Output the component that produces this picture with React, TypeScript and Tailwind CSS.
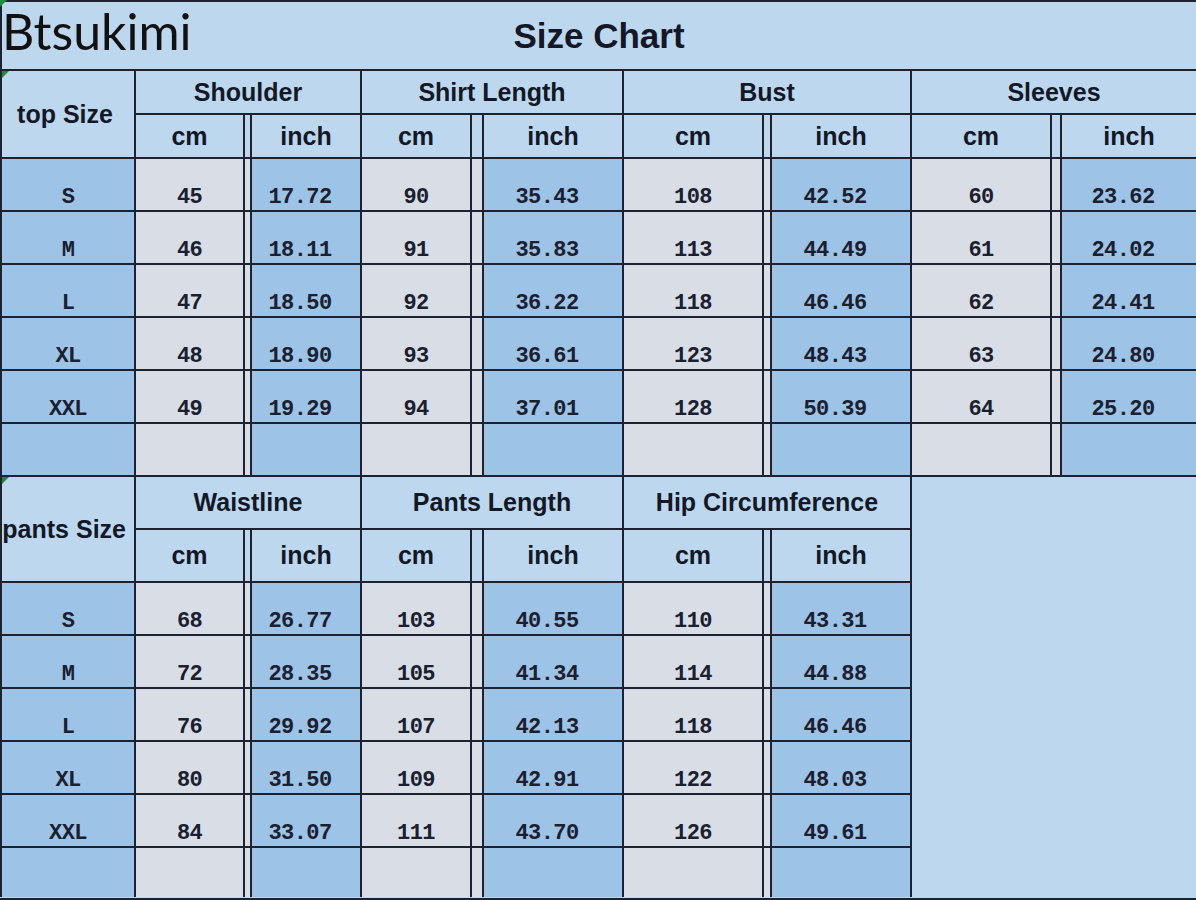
import React from "react"

const sizes = ["S", "M", "L", "XL", "XXL", ""]

type Group = { title: string; cm: string[]; inch: string[] }

const topGroups: Group[] = [
  { title: "Shoulder", cm: ["45", "46", "47", "48", "49", ""], inch: ["17.72", "18.11", "18.50", "18.90", "19.29", ""] },
  { title: "Shirt Length", cm: ["90", "91", "92", "93", "94", ""], inch: ["35.43", "35.83", "36.22", "36.61", "37.01", ""] },
  { title: "Bust", cm: ["108", "113", "118", "123", "128", ""], inch: ["42.52", "44.49", "46.46", "48.43", "50.39", ""] },
  { title: "Sleeves", cm: ["60", "61", "62", "63", "64", ""], inch: ["23.62", "24.02", "24.41", "24.80", "25.20", ""] },
]

const pantsGroups: Group[] = [
  { title: "Waistline", cm: ["68", "72", "76", "80", "84", ""], inch: ["26.77", "28.35", "29.92", "31.50", "33.07", ""] },
  { title: "Pants Length", cm: ["103", "105", "107", "109", "111", ""], inch: ["40.55", "41.34", "42.13", "42.91", "43.70", ""] },
  { title: "Hip Circumference", cm: ["110", "114", "118", "122", "126", ""], inch: ["43.31", "44.88", "46.46", "48.03", "49.61", ""] },
]

const line = "border-l-2 border-t-2 border-[#1c2230]"
const head = `${line} bg-[#bdd7ee] flex items-center justify-center font-['Liberation_Sans',Arial,sans-serif] font-bold text-[25px] leading-none text-[#121826] whitespace-nowrap`
const data = `${line} flex items-end justify-center pb-[1px] font-['Liberation_Mono','Courier_New',monospace] font-bold text-[22px] tracking-[-0.6px] leading-none text-[#1a2030]`

function Corner({ className }: { className: string }) {
  return (
    <svg className={`absolute ${className}`} width="7" height="7" viewBox="0 0 7 7">
      <polygon points="0,0 7,0 0,7" fill="#1f8a3a" />
    </svg>
  )
}

function SizeHeads({ groups, label }: { groups: Group[]; label: string }) {
  return (
    <>
      <div className={`${head} row-span-2 ${label === "pants Size" ? "justify-end pr-[8px] overflow-hidden" : "pr-[6px]"}`}>{label}</div>
      {groups.map((g) => (
        <div key={g.title} className={`${head} col-span-3`}>{g.title}</div>
      ))}
      {groups.map((g) => (
        <React.Fragment key={g.title + "-units"}>
          <div className={head}>cm</div>
          <div className={`${line} bg-[#bdd7ee]`} />
          <div className={head}>inch</div>
        </React.Fragment>
      ))}
    </>
  )
}

function DataRows({ groups }: { groups: Group[] }) {
  return (
    <>
      {sizes.map((s, i) => (
        <React.Fragment key={i}>
          <div className={`${data} bg-[#9dc3e6]`}>{s}</div>
          {groups.map((g) => (
            <React.Fragment key={g.title}>
              <div className={`${data} bg-[#d9dee6]`}>{g.cm[i]}</div>
              <div className={`${line} bg-[#d9dee6]`} />
              <div className={`${data} bg-[#9dc3e6] pr-3`}>{g.inch[i]}</div>
            </React.Fragment>
          ))}
        </React.Fragment>
      ))}
    </>
  )
}

export default function App() {
  return (
    <div className="relative w-[1196px] h-[900px] overflow-hidden bg-[#bdd7ee] border-b-2 border-[#1c2230]">
      <div className="h-[69px] border-t-2 border-l-2 border-[#1c2230] grid grid-cols-[1fr_auto_1fr] bg-[#bdd7ee]">
        <div className="self-start pt-[4px] font-['Lato','Open_Sans',sans-serif] text-[50px] leading-none text-[#111] whitespace-nowrap">
          Btsukimi
        </div>
        <div className="self-center font-['Liberation_Sans',Arial,sans-serif] font-bold text-[35px] leading-none text-[#121826]">
          Size Chart
        </div>
        <div />
      </div>

      <div className="grid grid-cols-[134px_109px_7px_110px_110px_12px_140px_140px_8px_140px_140px_10px_136px] grid-rows-[44px_44px_repeat(6,53px)]">
        <SizeHeads groups={topGroups} label="top Size" />
        <DataRows groups={topGroups} />
      </div>

      <div className="grid grid-cols-[134px_109px_7px_110px_110px_12px_140px_140px_8px_140px_286px] grid-rows-[53px_53px_53px_53px_53px_53px_53px_51px]">
        <SizeHeads groups={pantsGroups} label="pants Size" />
        <div className={`${line} bg-[#bdd7ee] col-start-11 row-start-1 row-span-8`} />
        <DataRows groups={pantsGroups} />
      </div>

      <Corner className="left-0 top-0" />
      <Corner className="left-[2px] top-[71px]" />
      <Corner className="left-[2px] top-[477px]" />
    </div>
  )
}
